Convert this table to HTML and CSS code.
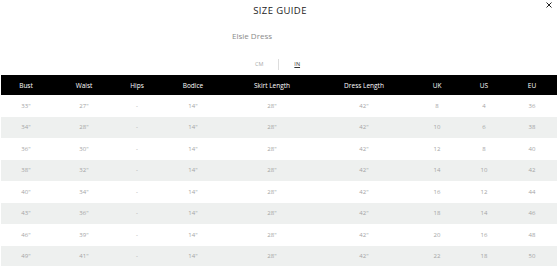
FILE: index.html
```html
<!DOCTYPE html>
<html lang="en">
<head>
    <meta charset="UTF-8">
    <title>Size Guide</title>
    <link rel="stylesheet" href="styles.css">
</head>
<body>
    <div class="modal">
        <!-- close button sits over the header -->
        <button class="close" aria-label="Close">
            <svg width="6" height="6" viewBox="0 0 6 6"><path d="M0.5 0.5 L5.5 5.5 M5.5 0.5 L0.5 5.5" stroke="#222" stroke-width="1" fill="none"/></svg>
        </button>

        <h2 class="title">SIZE GUIDE</h2>
        <p class="product">Elsie Dress</p>

        <div class="units">
            <span class="unit">CM</span>
            <span class="divider"></span>
            <span class="unit active">IN</span>
        </div>

        <table class="size-table">
            <colgroup>
                <col class="c-bust"><col class="c-waist"><col class="c-hips"><col class="c-bodice"><col class="c-skirt"><col class="c-dress"><col class="c-uk"><col class="c-us"><col class="c-eu">
            </colgroup>
            <thead>
                <tr><th>Bust</th><th>Waist</th><th>Hips</th><th>Bodice</th><th>Skirt Length</th><th>Dress Length</th><th>UK</th><th>US</th><th>EU</th></tr>
            </thead>
            <tbody>
                <tr><td>33"</td><td>27"</td><td>-</td><td>14"</td><td>28"</td><td>42"</td><td>8</td><td>4</td><td>36</td></tr>
                <tr><td>34"</td><td>28"</td><td>-</td><td>14"</td><td>28"</td><td>42"</td><td>10</td><td>6</td><td>38</td></tr>
                <tr><td>36"</td><td>30"</td><td>-</td><td>14"</td><td>28"</td><td>42"</td><td>12</td><td>8</td><td>40</td></tr>
                <tr><td>38"</td><td>32"</td><td>-</td><td>14"</td><td>28"</td><td>42"</td><td>14</td><td>10</td><td>42</td></tr>
                <tr><td>40"</td><td>34"</td><td>-</td><td>14"</td><td>28"</td><td>42"</td><td>16</td><td>12</td><td>44</td></tr>
                <tr><td>43"</td><td>36"</td><td>-</td><td>14"</td><td>28"</td><td>42"</td><td>18</td><td>14</td><td>46</td></tr>
                <tr><td>46"</td><td>39"</td><td>-</td><td>14"</td><td>28"</td><td>42"</td><td>20</td><td>16</td><td>48</td></tr>
                <tr><td>49"</td><td>41"</td><td>-</td><td>14"</td><td>28"</td><td>42"</td><td>22</td><td>18</td><td>50</td></tr>
            </tbody>
        </table>
    </div>
</body>
</html>
```

FILE: styles.css
```css
body {
    margin: 0;
    background: #fff;
    font-family: "Open Sans", "Liberation Sans", sans-serif;
    color: #222;
}

.modal {
    position: relative;
    width: 560px;
    height: 266px;
    overflow: hidden;
}

/* Close button, top right */
.close {
    position: absolute;
    top: 2px;
    right: 8px;
    border: 0;
    background: none;
    padding: 0;
    line-height: 0;
}

.title {
    margin: 0;
    padding-top: 4px;
    height: 14px;
    font-size: 9.5px;
    font-weight: 500;
    letter-spacing: 0.4px;
    line-height: 14px;
    text-align: center;
    color: #222;
}

.product {
    margin: 0;
    padding-top: 12px;
    padding-left: 232px;
    height: 12px;
    font-size: 8px;
    line-height: 12px;
    color: #8a8a8a;
}

/* CM / IN toggle */
.units {
    display: flex;
    justify-content: center;
    align-items: center;
    gap: 15px;
    padding-top: 16px;
    padding-right: 5px;
    height: 12px;
}

.unit {
    font-size: 5.5px;
    color: #aaa;
}

.unit.active {
    color: #333;
    text-decoration: underline;
}

.divider {
    width: 1px;
    height: 11px;
    background: #ddd;
}

/* Table */
.size-table {
    margin-top: 5px;
    margin-left: 1px;
    width: 556px;
    table-layout: fixed;
    border-collapse: collapse;
}

.c-bust { width: 50px; }
.c-waist { width: 66px; }
.c-hips { width: 40px; }
.c-bodice { width: 72px; }
.c-skirt { width: 86px; }
.c-dress { width: 98px; }
.c-uk { width: 48px; }
.c-us { width: 46px; }
.c-eu { width: 50px; }

.size-table th {
    background: #000;
    color: #fff;
    height: 20px;
    padding: 0;
    font-size: 6.5px;
    font-weight: 500;
    text-align: center;
}

.size-table td {
    height: 21.5px;
    padding: 0;
    font-size: 6px;
    color: #a4a4a4;
    text-align: center;
}

.size-table tbody tr:nth-child(even) {
    background: #eef0ef;
}
```
